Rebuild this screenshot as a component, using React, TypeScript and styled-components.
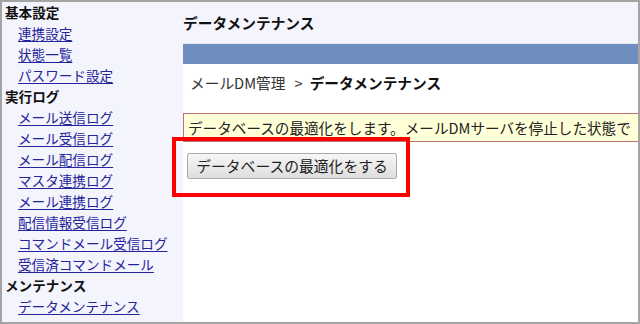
import React from "react";
import styled, { createGlobalStyle } from "styled-components";

const GlobalStyle = createGlobalStyle`
  html, body {
    margin: 0;
    padding: 0;
    background: #ffffff;
  }
  body {
    font-family: "Noto Sans CJK JP", "Liberation Sans", sans-serif;
  }
`;

const Frame = styled.div`
  position: relative;
  width: 640px;
  height: 324px;
  box-sizing: border-box;
  border: 2px solid #a4a4a4;
  background: #f4f4fc;
  display: flex;
  overflow: hidden;
`;

const Sidebar = styled.nav`
  width: 181px;
  flex-shrink: 0;
  display: flex;
  flex-direction: column;
  font-size: 13.6px;
`;

const Row = styled.div<{ $link?: boolean }>`
  height: 21px;
  line-height: 21px;
  padding-left: ${({ $link }) => ($link ? "16px" : "3px")};
  white-space: nowrap;
  font-weight: ${({ $link }) => ($link ? "normal" : "bold")};
  color: #111111;
`;

const NavLink = styled.a`
  color: #24249c;
  text-decoration: underline;
  text-underline-offset: 2px;
`;

const Main = styled.div`
  flex: 1;
  display: flex;
  flex-direction: column;
  min-width: 0;
`;

const PageTitle = styled.div`
  height: 41px;
  line-height: 41px;
  font-size: 14.7px;
  font-weight: bold;
  color: #111111;
  border-bottom: 1px solid #e6e6f4;
  white-space: nowrap;
`;

const BlueBar = styled.div`
  height: 20px;
  background: #6f8ec0;
`;

const Panel = styled.div`
  flex: 1;
  background: #ffffff;
  overflow: hidden;
  display: flex;
  flex-direction: column;
`;

const Breadcrumb = styled.div`
  height: 38px;
  line-height: 38px;
  padding-left: 7px;
  font-size: 14.7px;
  color: #333333;
  white-space: nowrap;

  strong {
    color: #111111;
  }
`;

const Separator = styled.span`
  margin: 0 7px 0 9px;
`;

const Notice = styled.div`
  margin-top: 11px;
  width: 640px;
  height: 29px;
  line-height: 27px;
  box-sizing: border-box;
  border: 1px solid #c07070;
  background: #ffffd8;
  padding-left: 4px;
  font-size: 14.6px;
  color: #222222;
  white-space: nowrap;
`;

const ActionButton = styled.button`
  margin: 11px 0 0 4px;
  width: 210px;
  height: 26px;
  padding: 0;
  border: 1px solid #ababab;
  border-radius: 2px;
  background: linear-gradient(#f6f6f6, #dedede);
  font-family: inherit;
  font-size: 14.8px;
  line-height: 24px;
  color: #222222;
  text-align: center;
`;

const Highlight = styled.div`
  position: absolute;
  left: 170px;
  top: 135px;
  width: 238px;
  height: 60px;
  box-sizing: border-box;
  border: 4px solid #ff0000;
  pointer-events: none;
`;

type NavItem = { label: string; link?: boolean };

const navItems: NavItem[] = [
  { label: "基本設定" },
  { label: "連携設定", link: true },
  { label: "状態一覧", link: true },
  { label: "パスワード設定", link: true },
  { label: "実行ログ" },
  { label: "メール送信ログ", link: true },
  { label: "メール受信ログ", link: true },
  { label: "メール配信ログ", link: true },
  { label: "マスタ連携ログ", link: true },
  { label: "メール連携ログ", link: true },
  { label: "配信情報受信ログ", link: true },
  { label: "コマンドメール受信ログ", link: true },
  { label: "受信済コマンドメール", link: true },
  { label: "メンテナンス" },
  { label: "データメンテナンス", link: true },
];

export default function App() {
  return (
    <>
      <GlobalStyle />
      <Frame>
        <Sidebar>
          {navItems.map((item) => (
            <Row key={item.label} $link={item.link}>
              {item.link ? <NavLink href="#">{item.label}</NavLink> : item.label}
            </Row>
          ))}
        </Sidebar>
        <Main>
          <PageTitle>データメンテナンス</PageTitle>
          <BlueBar />
          <Panel>
            <Breadcrumb>
              メールDM管理<Separator>&gt;</Separator>
              <strong>データメンテナンス</strong>
            </Breadcrumb>
            <Notice>データベースの最適化をします。メールDMサーバを停止した状態で</Notice>
            <div>
              <ActionButton type="button">データベースの最適化をする</ActionButton>
            </div>
          </Panel>
        </Main>
        <Highlight />
      </Frame>
    </>
  );
}
